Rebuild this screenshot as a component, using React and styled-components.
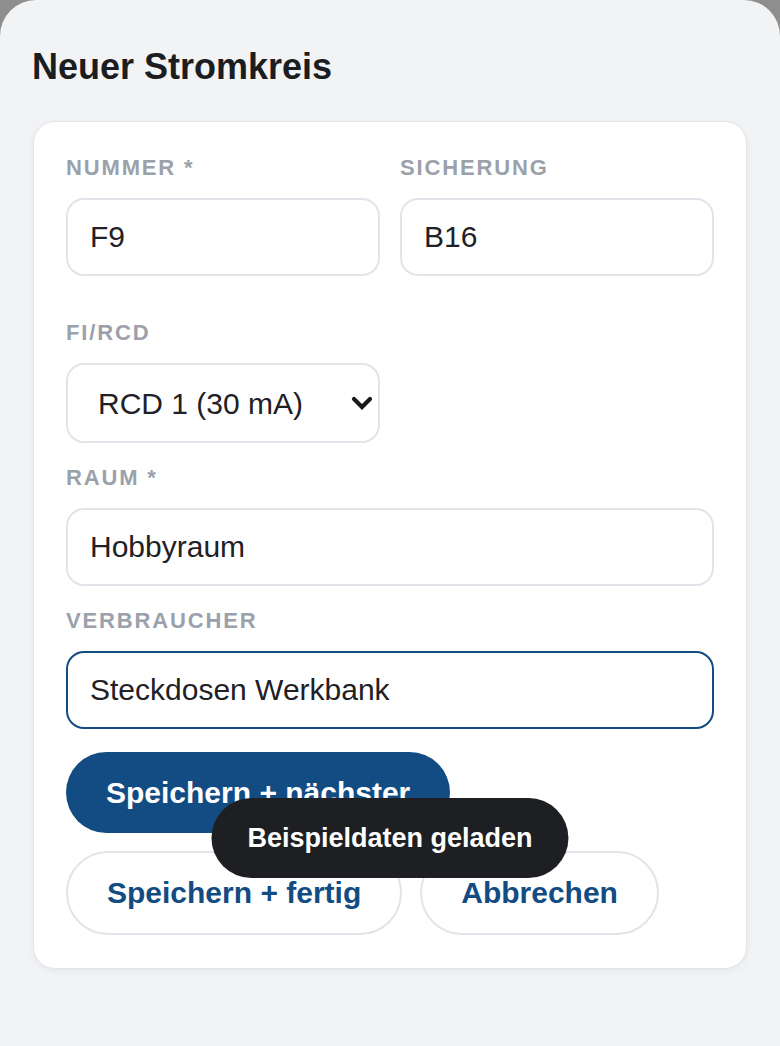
import React from "react";
import styled, { createGlobalStyle } from "styled-components";

const GlobalStyle = createGlobalStyle`
  html, body {
    margin: 0;
    padding: 0;
    background: #8e8e8e;
  }
  body {
    font-family: "Liberation Sans", Arial, sans-serif;
  }
  * { box-sizing: border-box; }
`;

const Sheet = styled.div`
  min-height: 1046px;
  background: #f2f3f5;
  border-radius: 36px 36px 0 0;
  padding: 45px 33px 40px;
`;

const Title = styled.h1`
  margin: 0 0 0 -1px;
  font-size: 36px;
  line-height: 43px;
  font-weight: 700;
  color: #1b1d21;
`;

const Card = styled.div`
  margin-top: 33px;
  background: #ffffff;
  border: 1px solid #e3e5e9;
  border-radius: 22px;
  padding: 33px 32px;
  box-shadow: 0 2px 6px rgba(20, 30, 50, 0.06);
`;

const Form = styled.form`
  display: flex;
  flex-direction: column;
  gap: 22px;
`;

const TopGrid = styled.div`
  display: grid;
  grid-template-columns: 1fr 1fr;
  column-gap: 20px;
  row-gap: 44px;
`;

const Field = styled.div`
  display: flex;
  flex-direction: column;
  min-width: 0;
`;

const Label = styled.label`
  font-size: 22px;
  line-height: 26px;
  font-weight: 700;
  letter-spacing: 1.85px;
  text-transform: uppercase;
  color: #9ba1aa;
  margin-bottom: 17px;
`;

const Input = styled.input`
  width: 100%;
  height: 78px;
  border: 2px solid ${(p) => (p.$focused ? "#124c82" : "#e1e4e9")};
  border-radius: 18px;
  background: #fff;
  padding: 0 22px;
  font-family: "Liberation Sans", Arial, sans-serif;
  font-size: 30px;
  color: #1f2124;
  outline: none;
`;

const SelectWrap = styled.div`
  position: relative;
`;

const Select = styled.select`
  appearance: none;
  -webkit-appearance: none;
  width: 100%;
  height: 80px;
  border: 2px solid #e1e4e9;
  border-radius: 18px;
  background: #fff;
  padding: 0 40px 0 30px;
  font-family: "Liberation Sans", Arial, sans-serif;
  font-size: 30px;
  color: #1f2124;
  outline: none;
`;

const Chevron = styled.svg`
  position: absolute;
  right: 7px;
  top: 50%;
  transform: translateY(-50%);
  pointer-events: none;
`;

const Actions = styled.div`
  display: flex;
  flex-wrap: wrap;
  gap: 18px;
  margin-top: 1px;
`;

const Button = styled.button`
  font-family: "Liberation Sans", Arial, sans-serif;
  font-size: 30px;
  font-weight: 700;
  border-radius: 999px;
  cursor: pointer;
  white-space: nowrap;
  height: ${(p) => (p.$primary ? 81 : 84)}px;
  padding: ${(p) => (p.$primary ? "0 40px" : "0 39px")};
  background: ${(p) => (p.$primary ? "#124c82" : "#ffffff")};
  color: ${(p) => (p.$primary ? "#ffffff" : "#124c82")};
  border: ${(p) => (p.$primary ? "none" : "2px solid #e1e4e9")};
`;

const Toast = styled.div`
  position: fixed;
  left: 50%;
  bottom: 168px;
  transform: translateX(-50%);
  height: 80px;
  padding: 0 36px;
  display: flex;
  align-items: center;
  background: #1d1f23;
  color: #ffffff;
  border-radius: 999px;
  font-size: 27px;
  font-weight: 700;
  white-space: nowrap;
`;

export default function App() {
  return (
    <>
      <GlobalStyle />
      <Sheet>
        <Title>Neuer Stromkreis</Title>
        <Card>
          <Form onSubmit={(e) => e.preventDefault()}>
            <TopGrid>
              <Field>
                <Label>Nummer *</Label>
                <Input defaultValue="F9" />
              </Field>
              <Field>
                <Label>Sicherung</Label>
                <Input defaultValue="B16" />
              </Field>
              <Field>
                <Label>FI/RCD</Label>
                <SelectWrap>
                  <Select defaultValue="rcd1">
                    <option value="rcd1">RCD 1 (30 mA)</option>
                    <option value="rcd2">RCD 2 (30 mA)</option>
                  </Select>
                  <Chevron width="22" height="14" viewBox="0 0 22 14">
                    <polyline
                      points="3,3 11,11 19,3"
                      fill="none"
                      stroke="#1a1a1a"
                      strokeWidth="4.2"
                      strokeLinecap="round"
                      strokeLinejoin="miter"
                    />
                  </Chevron>
                </SelectWrap>
              </Field>
            </TopGrid>
            <Field>
              <Label>Raum *</Label>
              <Input defaultValue="Hobbyraum" />
            </Field>
            <Field>
              <Label>Verbraucher</Label>
              <Input $focused defaultValue="Steckdosen Werkbank" />
            </Field>
            <Actions>
              <Button $primary type="button">Speichern + nächster</Button>
              <Button type="button">Speichern + fertig</Button>
              <Button type="button">Abbrechen</Button>
            </Actions>
          </Form>
        </Card>
      </Sheet>
      <Toast>Beispieldaten geladen</Toast>
    </>
  );
}
